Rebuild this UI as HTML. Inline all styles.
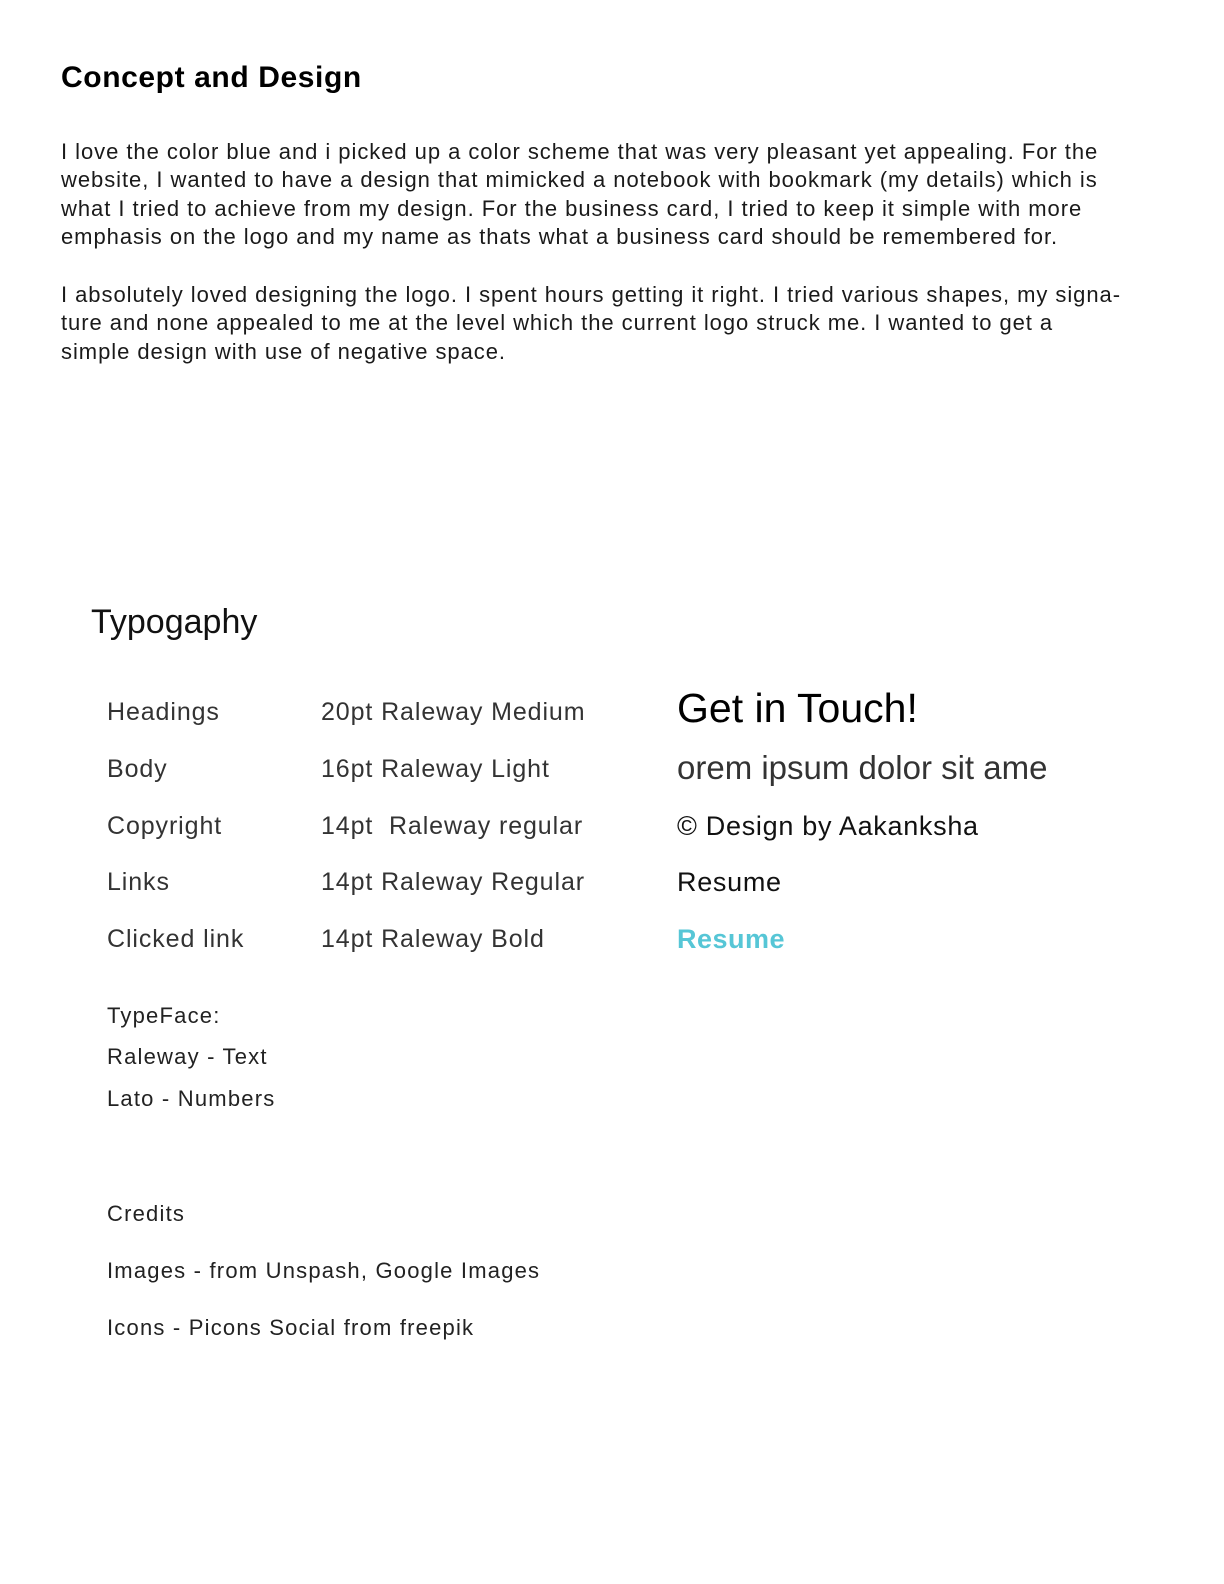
<!DOCTYPE html>
<html><head><meta charset="utf-8"><style>
html,body{margin:0;padding:0;background:#fff;width:1224px;height:1584px;overflow:hidden}
body{position:relative;font-family:"Liberation Sans",sans-serif;color:#111}
.a{position:absolute;white-space:nowrap;line-height:1}
.p{font-size:22px;color:#1a1a1a;letter-spacing:0.95px}
.t{font-size:25px;color:#333;letter-spacing:0.9px}
.s{font-size:22px;color:#222;letter-spacing:1.2px}
</style></head><body>
<div class="a" style="left:61px;top:63px;font-size:30px;font-weight:bold;color:#000;letter-spacing:0.6px">Concept and Design</div>
<div class="a p" style="left:61px;top:141px">I love the color blue and i picked up a color scheme that was very pleasant yet appealing. For the</div>
<div class="a p" style="left:61px;top:169px">website, I wanted to have a design that mimicked a notebook with bookmark (my details) which is</div>
<div class="a p" style="left:61px;top:198px">what I tried to achieve from my design. For the business card, I tried to keep it simple with more</div>
<div class="a p" style="left:61px;top:226px">emphasis on the logo and my name as thats what a business card should be remembered for.</div>
<div class="a p" style="left:61px;top:284px">I absolutely loved designing the logo. I spent hours getting it right. I tried various shapes, my signa-</div>
<div class="a p" style="left:61px;top:312px">ture and none appealed to me at the level which the current logo struck me. I wanted to get a</div>
<div class="a p" style="left:61px;top:341px">simple design with use of negative space.</div>

<div class="a" style="left:91px;top:605px;font-size:34px;color:#111">Typogaphy</div>

<div class="a t" style="left:107px;top:700px">Headings</div>
<div class="a t" style="left:321px;top:700px">20pt Raleway Medium</div>
<div class="a t" style="left:107px;top:757px">Body</div>
<div class="a t" style="left:321px;top:757px">16pt Raleway Light</div>
<div class="a t" style="left:107px;top:814px">Copyright</div>
<div class="a t" style="left:321px;top:814px">14pt&nbsp; Raleway regular</div>
<div class="a t" style="left:107px;top:870px">Links</div>
<div class="a t" style="left:321px;top:870px">14pt Raleway Regular</div>
<div class="a t" style="left:107px;top:927px">Clicked link</div>
<div class="a t" style="left:321px;top:927px">14pt Raleway Bold</div>

<div class="a" style="left:677px;top:688px;font-size:41px;color:#000">Get in Touch!</div>
<div class="a" style="left:677px;top:751px;font-size:33px;color:#333">orem ipsum dolor sit ame</div>
<div class="a" style="left:677px;top:813px;font-size:27px;color:#111;letter-spacing:0.7px">© Design by Aakanksha</div>
<div class="a" style="left:677px;top:869px;font-size:27px;color:#111;letter-spacing:0.7px">Resume</div>
<div class="a" style="left:677px;top:926px;font-size:27px;font-weight:bold;color:#56c6d6;letter-spacing:0.5px">Resume</div>

<div class="a s" style="left:107px;top:1005px">TypeFace:</div>
<div class="a s" style="left:107px;top:1046px">Raleway - Text</div>
<div class="a s" style="left:107px;top:1088px">Lato - Numbers</div>

<div class="a s" style="left:107px;top:1203px">Credits</div>
<div class="a s" style="left:107px;top:1260px">Images - from Unspash, Google Images</div>
<div class="a s" style="left:107px;top:1317px">Icons - Picons Social from freepik</div>
</body></html>
